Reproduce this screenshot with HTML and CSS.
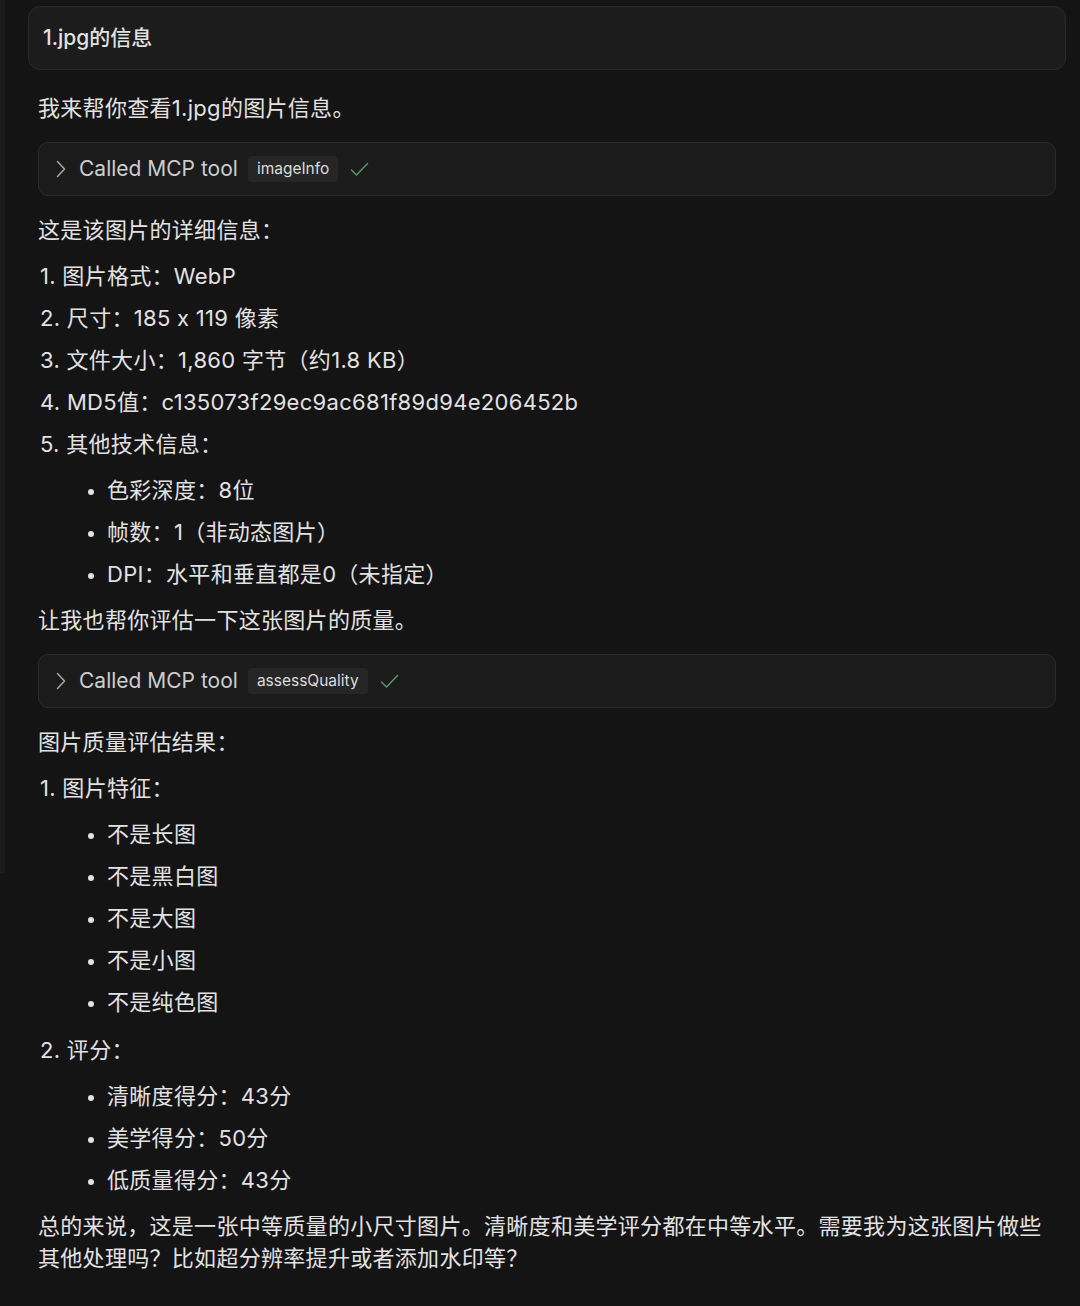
FILE: index.html
```html
<!DOCTYPE html>
<html lang="zh-CN">
<head>
    <meta charset="UTF-8">
    <meta name="viewport" content="width=device-width, initial-scale=1.0">
    <title>1.jpg的信息</title>
    <link rel="stylesheet" href="styles.css">
</head>
<body>
    <div class="page">
        <div class="prompt">1.jpg的信息</div>

        <div class="reply">
            <p>我来帮你查看1.jpg的图片信息。</p>

            <div class="tool">
                <svg class="chevron" width="12" height="20" viewBox="0 0 12 20"><path d="M2.5 2.5 L9.5 10 L2.5 17.5" fill="none" stroke="#a8a8a8" stroke-width="1.5" stroke-linecap="round" stroke-linejoin="round"/></svg>
                <span class="tool-label">Called MCP tool</span>
                <span class="tool-name">imageInfo</span>
                <svg class="check" width="19" height="15" viewBox="0 0 19 15"><path d="M1.5 8 L6.5 13 L17.5 1.5" fill="none" stroke="#4f9a68" stroke-width="1.5" stroke-linecap="round" stroke-linejoin="round"/></svg>
            </div>

            <p>这是该图片的详细信息：</p>
            <ol class="steps">
                <li>1. 图片格式：WebP</li>
                <li>2. 尺寸：185 x 119 像素</li>
                <li>3. 文件大小：1,860 字节（约1.8 KB）</li>
                <li>4. MD5值：c135073f29ec9ac681f89d94e206452b</li>
                <li>5. 其他技术信息：
                    <ul class="bullets">
                        <li>色彩深度：8位</li>
                        <li>帧数：1（非动态图片）</li>
                        <li>DPI：水平和垂直都是0（未指定）</li>
                    </ul>
                </li>
            </ol>

            <p>让我也帮你评估一下这张图片的质量。</p>

            <div class="tool">
                <svg class="chevron" width="12" height="20" viewBox="0 0 12 20"><path d="M2.5 2.5 L9.5 10 L2.5 17.5" fill="none" stroke="#a8a8a8" stroke-width="1.5" stroke-linecap="round" stroke-linejoin="round"/></svg>
                <span class="tool-label">Called MCP tool</span>
                <span class="tool-name">assessQuality</span>
                <svg class="check" width="19" height="15" viewBox="0 0 19 15"><path d="M1.5 8 L6.5 13 L17.5 1.5" fill="none" stroke="#4f9a68" stroke-width="1.5" stroke-linecap="round" stroke-linejoin="round"/></svg>
            </div>

            <p>图片质量评估结果：</p>
            <ol class="steps">
                <li class="group">1. 图片特征：
                    <ul class="bullets">
                        <li>不是长图</li>
                        <li>不是黑白图</li>
                        <li>不是大图</li>
                        <li>不是小图</li>
                        <li>不是纯色图</li>
                    </ul>
                </li>
                <li>2. 评分：
                    <ul class="bullets">
                        <li>清晰度得分：43分</li>
                        <li>美学得分：50分</li>
                        <li>低质量得分：43分</li>
                    </ul>
                </li>
            </ol>

            <p>总的来说，这是一张中等质量的小尺寸图片。清晰度和美学评分都在中等水平。需要我为这张图片做些其他处理吗？比如超分辨率提升或者添加水印等？</p>
        </div>
    </div>
</body>
</html>
```

FILE: styles.css
```css
html, body {
    margin: 0;
    height: 100%;
}
body {
    font-family: Inter, "Noto Sans CJK SC", sans-serif;
    color: #e2e2e2;
    background: linear-gradient(#1b1b1b, #1b1b1b) 0 0 / 5px 873px no-repeat, #141414;
}
.page {
    padding: 6px 14px 0 28px;
}
.prompt {
    background-color: #1c1c1c;
    border: 1px solid #2a2a2a;
    border-radius: 12px;
    padding: 16px 14px;
    font-size: 21px;
    line-height: 30px;
    font-weight: 500;
}
.reply {
    padding: 22px 10px 0;
    font-size: 22px;
    line-height: 32px;
    letter-spacing: 0.3px;
}
.reply p {
    margin: 0 0 14px;
}
.tool {
    display: flex;
    align-items: center;
    height: 52px;
    margin: 18px 0 18px;
    padding-left: 16px;
    background-color: #1b1b1b;
    border: 1px solid #2b2b2b;
    border-radius: 10px;
    letter-spacing: 0;
}
.chevron {
    margin-right: 12px;
}
.tool-label {
    color: #cdcdcd;
    font-size: 21px;
}
.tool-name {
    margin: 0 12px 0 10px;
    padding: 0 9px;
    height: 26px;
    line-height: 26px;
    font-size: 15.5px;
    color: #dcdcdc;
    background-color: #262626;
    border-radius: 4px;
}
.steps {
    list-style: none;
    margin: 0 0 14px;
    padding: 0 0 0 2px;
}
.steps > li + li {
    margin-top: 10px;
}
.steps > li.group + li {
    margin-top: 16px;
}
.bullets {
    margin: 14px 0 0;
    padding-left: 67px;
    list-style: disc;
}
.bullets li + li {
    margin-top: 10px;
}
.bullets li::marker {
    font-size: 20px;
}
```
